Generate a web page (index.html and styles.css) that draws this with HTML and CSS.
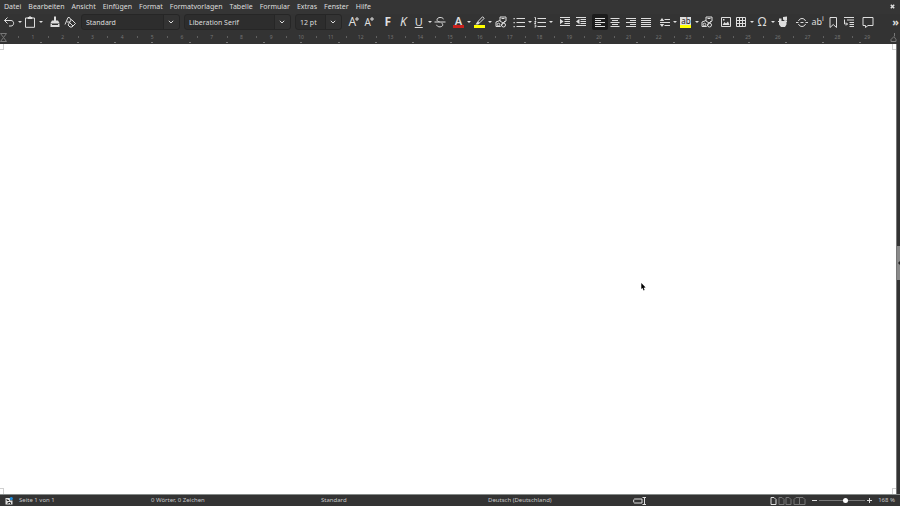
FILE: index.html
```html
<!DOCTYPE html>
<html lang="de">
<head>
    <meta charset="UTF-8">
    <meta name="viewport" content="width=device-width, initial-scale=1.0">
    <title>Writer</title>
    <link rel="stylesheet" href="styles.css">
</head>
<body>
    <nav class="menubar">
        <button>Datei</button>
        <button>Bearbeiten</button>
        <button>Ansicht</button>
        <button>Einfügen</button>
        <button>Format</button>
        <button>Formatvorlagen</button>
        <button>Tabelle</button>
        <button>Formular</button>
        <button>Extras</button>
        <button>Fenster</button>
        <button>Hilfe</button>
        <button class="close" aria-label="Schließen"><svg width="5" height="5" viewBox="0 0 5 5"><path class="thick" d="M.8.8l3.4 3.4M4.2.8L.8 4.2"/></svg></button>
    </nav>

    <div class="toolbar">
        <div class="group split-pair">
            <button aria-label="Rückgängig"><svg class="icon" viewBox="0 0 12 12"><path d="M4.5 1.500L1.500 4.500l3 3M1.500 4.500h6.500c3.500 0 3.500 5.500 0 5.500H6"/></svg></button>
            <button class="caret" aria-label="Rückgängig Liste"></button>
            <button aria-label="Einfügen"><svg class="icon" viewBox="0 0 12 12"><path d="M3.500 2H1.500v9.300h9V2h-2"/><path class="fill" d="M3.500 1h1.500l.5-.8h1l.5.8h1.500v2h-5z"/></svg></button>
            <button class="caret" aria-label="Einfügen Liste"></button>
        </div>
        <div class="group pair">
            <button aria-label="Format übertragen"><svg class="icon" viewBox="0 0 12 12"><path class="fill" d="M5 .5h2v4h2L10.500 7h-9L3 4.500h2zM1.500 7.500h9V11h-9z"/><path class="dark" d="M3 8.500h6"/></svg></button>
            <button aria-label="Formatierung löschen"><svg class="icon" viewBox="0 0 12 12"><path d="M1 8.500L4 1.500h1.500L7 4M3 6h3M7.500 3.500l4 4-3.500 3.500H6L4 9zM5.500 6.500l3.500 3.500"/></svg></button>
        </div>
        <div class="combo combo-style">
            <select aria-label="Absatzvorlage"><option>Standard</option></select>
            <svg viewBox="0 0 6 4"><path d="M.8.8L3 3 5.200.8"/></svg>
        </div>
        <div class="combo combo-font">
            <select aria-label="Schriftname"><option>Liberation Serif</option></select>
            <svg viewBox="0 0 6 4"><path d="M.8.8L3 3 5.200.8"/></svg>
        </div>
        <div class="combo combo-size">
            <select aria-label="Schriftgröße"><option>12 pt</option></select>
            <svg viewBox="0 0 6 4"><path d="M.8.8L3 3 5.200.8"/></svg>
        </div>
        <div class="group pair">
            <button class="glyph" aria-label="Größer">A<svg class="mark" viewBox="0 0 4 4"><path d="M0 2h4M2 0v4"/></svg></button>
            <button class="glyph small" aria-label="Kleiner">A<svg class="mark" viewBox="0 0 4 4"><path d="M0 2h4M2 0v4"/></svg></button>
        </div>
        <div class="group font-style">
            <button class="glyph bold">F</button>
            <button class="glyph italic">K</button>
            <button class="glyph underline">U</button>
            <button class="caret" aria-label="Unterstreichung Liste"></button>
            <button aria-label="Durchgestrichen"><svg class="icon" viewBox="0 0 12 12"><path d="M9.500 3.300C9 .8 3 .8 3 3.800c0 1.200 1 1.700 2.500 2M.5 6h11M7.500 6.800C10.500 9.500 7.500 11.200 5 10.800c-1.200-.2-2-.8-2.500-2"/></svg></button>
        </div>
        <div class="group colors">
            <button class="swatch red">A</button>
            <button class="caret" aria-label="Schriftfarbe Liste"></button>
            <button class="swatch yellow" aria-label="Zeichenhervorhebung"><svg width="10" height="9" viewBox="0 0 10 9"><path d="M3 5.500L7.500.800l1.700 1.500-4.500 4.500z"/><path class="fill" d="M2.500 5.500l2.200 1.800L3 8.500H.5z"/></svg></button>
            <button class="caret" aria-label="Hervorhebung Liste"></button>
            <button aria-label="Zeichen"><svg class="icon" viewBox="0 0 12 12"><path d="M5 1h6v4L8 7 5 5zM6.500 2.500h3M5 4.500L1 6v4.500h4.500L10 5"/><circle cx="3.500" cy="8.500" r="1.300"/><circle cx="8.500" cy="9" r="2"/></svg></button>
        </div>
        <div class="group split-pair">
            <button aria-label="Aufzählung"><svg class="icon" viewBox="0 0 12 12"><path d="M3.500 2.500H12M3.500 6.500H12M3.500 10.500H12"/><path class="fill" d="M.5 2h1.300v1.200H.5zM.5 6h1.300v1.200H.5zM.5 10h1.300v1.200H.5z"/></svg></button>
            <button class="caret" aria-label="Aufzählung Liste"></button>
            <button aria-label="Nummerierung"><svg class="icon" viewBox="0 0 12 12"><path d="M3.500 2.500H12M3.500 6.500H12M3.500 10.500H12M.5 1.500h1v3M.5 5.500h1.500L.5 7.500h1.500M.5 9h1.300v2H.5"/></svg></button>
            <button class="caret" aria-label="Nummerierung Liste"></button>
        </div>
        <div class="group indent">
            <button aria-label="Einzug erhöhen"><svg class="icon" viewBox="0 0 12 12"><path d="M1 1.500h10M5.500 3.500h5.500M5.500 5.500h5.500M5.500 7.500h5.500M1 9.500h10"/><path class="fill" d="M1 2.800L4.500 5.500 1 8.200z"/></svg></button>
            <button aria-label="Einzug verringern"><svg class="icon" viewBox="0 0 12 12"><path d="M1 1.500h10M5.500 3.500h5.500M5.500 5.500h5.500M5.500 7.500h5.500M1 9.500h10"/><path class="fill" d="M4.500 2.800L1 5.500l3.500 2.700z"/></svg></button>
        </div>
        <div class="group four">
            <button class="active" aria-label="Linksbündig"><svg class="icon" viewBox="0 0 12 12"><path d="M1 2.500h10M1 4.500h6M1 6.500h10M1 8.500h6M1 10.500h10"/></svg></button>
            <button aria-label="Zentriert"><svg class="icon" viewBox="0 0 12 12"><path d="M1.500 2.500h9M3 4.500h6M1.500 6.500h9M3 8.500h6M1.500 10.500h9"/></svg></button>
            <button aria-label="Rechtsbündig"><svg class="icon" viewBox="0 0 12 12"><path d="M1 2.500h10M5 4.500h6M1 6.500h10M5 8.500h6M1 10.500h10"/></svg></button>
            <button aria-label="Blocksatz"><svg class="icon" viewBox="0 0 12 12"><path d="M1 2.500h10M1 4.500h10M1 6.500h10M1 8.500h10M1 10.500h10"/></svg></button>
        </div>
        <div class="group spacing">
            <button aria-label="Zeilenabstand"><svg class="icon" viewBox="0 0 12 12"><path d="M5.500 3.500H11M1 6.500h10M5.500 9.500H11"/><path class="fill" d="M.8 5L3 2l2.200 3zM.8 8L3 11l2.200-3z"/></svg></button>
            <button class="caret" aria-label="Zeilenabstand Liste"></button>
            <button class="marker" aria-label="Absatzhintergrund"><span>ab</span></button>
            <button class="caret" aria-label="Absatzhintergrund Liste"></button>
            <button aria-label="Absatz"><svg class="icon" viewBox="0 0 12 12"><path d="M5 1h6v4L8 7 5 5zM6.500 2.500h3M5 4.500L1 6v4.500h4.500L10 5"/><circle cx="3.500" cy="8.500" r="1.300"/><circle cx="8.500" cy="9" r="2"/></svg></button>
        </div>
        <div class="group insert">
            <button aria-label="Bild"><svg class="icon" viewBox="0 0 12 12"><path d="M1.500 1.500h9v9h-9z"/><path class="fill" d="M2.500 9l2-3L6 7.500 8 5.500l1.500 3.500zM3 3h1.500v1.500H3z"/></svg></button>
            <button aria-label="Tabelle"><svg class="icon" viewBox="0 0 12 12"><path d="M1.500 1.500h9v9h-9zM1.500 4.500h9M1.500 7.500h9M4.500 1.500v9M7.500 1.500v9"/></svg></button>
            <button class="caret" aria-label="Tabelle Liste"></button>
            <button class="glyph">Ω</button>
            <button class="caret" aria-label="Sonderzeichen Liste"></button>
            <button aria-label="Textbaustein"><svg class="icon" viewBox="0 0 12 12"><path class="fill" d="M2 6h7.500v2.500L8 11H4L2 8.500zM2 2.500h2.500V5H2zM6 1l4-.5v4L8 5 6 3.500z"/><path d="M1 5.500h9"/></svg></button>
        </div>
        <div class="group links">
            <button aria-label="Seitenumbruch"><svg class="icon" viewBox="0 0 12 12"><path d="M0 6.500h2.500M9.500 6.500H12M4.500 6.500h3M2.500 5c1-3.300 6-3.300 7 0M2.500 8c1 3.300 6 3.300 7 0"/></svg></button>
            <button class="glyph note">ab<sup>i</sup></button>
            <button aria-label="Lesezeichen"><svg class="icon" viewBox="0 0 12 12"><path d="M3 1.500h6.500v10L6.250 8.500 3 11.500z"/></svg></button>
            <button aria-label="Querverweis"><svg class="icon" viewBox="0 0 12 12"><path d="M1 1.500h10M4 4h7M6.500 6.500H11M6.500 8.500H11M6.500 10.500H11M1.500 3.500v4.500h3M3 6.500L4.500 8 3 9.500"/></svg></button>
        </div>
        <button class="comment" aria-label="Kommentar"><svg class="icon" viewBox="0 0 12 12"><path d="M1 1.500h10v8H6L3.500 11.500v-2H1z"/></svg></button>
        <button class="more">»</button>
    </div>

    <div class="ruler">
        <svg class="margin-mark" viewBox="0 0 7 9"><path d="M.5.5h6L3.500 4.500zM.5 8.500h6L3.500 4.500z"/></svg>
        <div class="numbers" id="numbers"></div>
        <div class="tabs" id="tabs"></div>
        <svg class="margin-mark end" viewBox="0 0 7 9"><path d="M4.500 0v3M4 3.500L1 6.500v2h5v-2L4 3.500"/></svg>
    </div>

    <main class="workspace">
        <div class="page" contenteditable="true" role="textbox" aria-label="Dokument">
            <i class="corner top left"></i>
            <i class="corner top right"></i>
            <i class="corner bottom left"></i>
            <i class="corner bottom right"></i>
        </div>
        <aside class="sidebar-edge">
            <button class="handle" aria-label="Seitenleiste"></button>
        </aside>
        <svg class="pointer" viewBox="0 0 5 8"><path d="M.3 0v6l1.300-1 1 2.500 1-.5-1-2.300 2-.2z"/></svg>
    </main>

    <footer class="statusbar">
        <span class="save"><svg width="8" height="8" viewBox="0 0 8 8"><path class="fill" d="M.5 1h4.500v2.500h2.500V7.500h-7z"/><path class="dark" d="M2 2v1.500h2M3 7V5.500h2.500V7"/><circle class="dot" cx="6.300" cy="1.600" r="1.600"/></svg></span>
        <span>Seite 1 von 1</span>
        <span>0 Wörter, 0 Zeichen</span>
        <span>Standard</span>
        <span>Deutsch (Deutschland)</span>
        <div class="status-right">
            <svg class="insert-mode" width="13" height="8" viewBox="0 0 13 8"><path d="M9 2H1.500C.3 2 .3 6 1.500 6H9zM9.500.5h4M11.500.5v7M9.500 7.500h4"/></svg>
            <div class="views">
                <button aria-label="Einzelseite" class="selected"><svg width="7" height="8" viewBox="0 0 7 8"><path d="M1 .5h3L6 2.500v5H1z"/></svg></button>
                <button aria-label="Mehrere Seiten"><svg width="14" height="8" viewBox="0 0 14 8"><path d="M1 .5h3L6 2.500v5H1zM8 .5h3l2 2v5H8z"/></svg></button>
                <button aria-label="Buchansicht"><svg width="13" height="8" viewBox="0 0 13 8"><path d="M6.500.5H3L1 2.500v5h5.500zM6.500.5H10l2 2v5H6.500z"/></svg></button>
            </div>
            <div class="zoom">
                <button aria-label="Verkleinern"><svg width="5" height="5" viewBox="0 0 5 5"><path d="M0 2.500h5"/></svg></button>
                <input type="range" aria-label="Zoom" min="0" max="100" value="58">
                <button aria-label="Vergrößern"><svg width="5" height="5" viewBox="0 0 5 5"><path d="M0 2.500h5M2.500 0v5"/></svg></button>
            </div>
            <span>168 %</span>
        </div>
    </footer>

    <script>
        const numbers = document.getElementById('numbers');
        const tabs = document.getElementById('tabs');

        // Zentimeter
        for (let i = 1; i <= 29; i++) {
            const cell = document.createElement('span');
            cell.textContent = i;
            numbers.appendChild(cell);
        }

        // Standardtabulatoren
        for (let i = 0; i < 23; i++) {
            tabs.appendChild(document.createElement('span'));
        }
    </script>
</body>
</html>
```
FILE: styles.css
```css
* {
    box-sizing: border-box;
}
body {
    margin: 0;
    height: 100vh;
    display: flex;
    flex-direction: column;
    overflow: hidden;
    background: #333;
    color: #dedede;
    font-family: "Noto Sans", "Open Sans", sans-serif;
    font-size: 7px;
}
button {
    display: flex;
    align-items: center;
    justify-content: center;
    padding: 0;
    border: none;
    background: none;
    color: inherit;
    font: inherit;
}
svg {
    display: block;
    flex: none;
    fill: none;
    stroke: #dedede;
}
svg .fill {
    fill: #dedede;
    stroke: none;
}
svg .thick {
    stroke-width: 1.5;
}
svg .dark {
    stroke: #333;
}

/* Menü */
.menubar {
    display: flex;
    gap: 7px;
    height: 14px;
    padding: 0 5px 1px 4px;
    background: #353535;
}
.close {
    margin-left: auto;
}

/* Symbolleiste */
.toolbar {
    display: flex;
    align-items: center;
    gap: 3px;
    height: 18px;
    padding: 0 1px 2px;
}
.group {
    display: flex;
    flex: none;
    height: 16px;
}
.group button {
    flex: 1;
    min-width: 0;
    border-radius: 2px;
}
.split-pair {
    width: 43px;
}
.pair {
    width: 31px;
}
.indent {
    width: 32px;
}
.font-style {
    width: 68px;
}
.colors {
    width: 57px;
}
.four {
    width: 62px;
}
.spacing {
    width: 58px;
}
.insert {
    width: 73px;
}
.links {
    width: 63px;
}
.icon {
    width: 12px;
    height: 12px;
}
.group .caret {
    flex: none;
    width: 6px;
}
.caret::after {
    content: "";
    border: 2px solid transparent;
    border-top-color: #dedede;
    border-bottom: none;
}
.group .active {
    background: #1c1c1c;
}
.combo {
    display: grid;
    grid-template-columns: 1fr 16px;
    align-items: center;
    flex: none;
    height: 16px;
    margin-right: 1px;
    border: 1px solid #262626;
    border-radius: 3px;
    background: linear-gradient(to left, #333 15px, #262626 15px, #262626 16px, #2d2d2d 16px);
}
.combo select {
    grid-area: 1 / 1 / 2 / 3;
    height: 14px;
    padding: 0 0 0 4px;
    appearance: none;
    border: none;
    background: none;
    color: inherit;
    font: inherit;
}
.combo svg {
    grid-area: 1 / 2;
    width: 6px;
    height: 4px;
    justify-self: center;
    pointer-events: none;
}
.combo-style {
    width: 99px;
}
.combo-font {
    width: 107px;
}
.combo-size {
    width: 47px;
}
.glyph {
    font-size: 12px;
    line-height: 16px;
}
.glyph.small {
    font-size: 10px;
}
.mark {
    width: 4px;
    height: 4px;
    align-self: flex-start;
    margin: 3px 0 0 -1px;
}
.bold {
    font-weight: bold;
}
.italic {
    font-style: italic;
}
.underline {
    font-size: 11px;
    text-decoration: underline;
}
.note {
    font-size: 9px;
}
.note sup {
    align-self: flex-start;
    font-size: 7px;
    line-height: 10px;
}
.swatch {
    flex-direction: column;
    font-size: 11px;
    font-weight: 600;
    line-height: 9px;
}
.swatch::after {
    content: "";
    flex: none;
    width: 11px;
    height: 3px;
}
.red::after {
    background: #c9211e;
}
.yellow::after {
    background: #ff0;
}
.marker span {
    width: 11px;
    height: 11px;
    border-bottom: 3px solid #ff0;
    background: #dedede;
    color: #222;
    font-size: 8px;
    line-height: 8px;
}
.comment {
    width: 15px;
}
.more {
    margin-left: auto;
    font-size: 11px;
    font-weight: bold;
    line-height: 14px;
}

/* Lineal */
.ruler {
    display: grid;
    grid-template-rows: 8px 2px;
    height: 12px;
    padding-top: 1px;
    position: relative;
    color: #757575;
    font-size: 5px;
    line-height: 8px;
}
.numbers {
    display: flex;
    margin: 0 18px;
}
.numbers span {
    flex: 1;
    text-align: center;
    background: linear-gradient(#606060, #606060) left center / 1px 2px no-repeat;
}
.tabs {
    display: flex;
    margin: 0 21px 0 22px;
}
.tabs span {
    flex: 1;
    background: linear-gradient(#757575, #757575) center / 2px 1px no-repeat;
}
.margin-mark {
    position: absolute;
    left: 0;
    top: 1px;
    width: 7px;
    height: 9px;
    stroke: #777;
}
.margin-mark.end {
    left: auto;
    right: 3px;
}

/* Dokument */
.workspace {
    display: flex;
    flex: 1;
    position: relative;
}
.page {
    flex: 1;
    position: relative;
    background: #fff;
    outline: none;
}
.corner {
    position: absolute;
    width: 4px;
    height: 6px;
    border: 0 solid #d0d0d0;
}
.top {
    top: 0;
    border-bottom-width: 1px;
}
.bottom {
    bottom: 0;
    border-top-width: 1px;
}
.left {
    left: 0;
    border-right-width: 1px;
}
.right {
    right: 0;
    border-left-width: 1px;
}
.sidebar-edge {
    display: flex;
    align-items: center;
    width: 4px;
    padding-bottom: 12px;
    border-left: 1px solid #777;
    background: #333;
}
.handle {
    width: 3px;
    height: 34px;
    background: #8a8a8a;
}
.handle::after {
    content: "";
    border: 2px solid transparent;
    border-right-color: #222;
    border-left: none;
}
.pointer {
    position: absolute;
    left: 641px;
    top: 239px;
    width: 5px;
    height: 8px;
    stroke: none;
    fill: #000;
}

/* Statusleiste */
.statusbar {
    display: grid;
    grid-template-columns: 19fr 132fr 170fr 167fr 145fr 267fr;
    align-items: center;
    height: 12px;
    border-top: 1px solid #858a88;
    color: #c8c8c8;
    font-size: 6px;
    line-height: 11px;
    white-space: nowrap;
}
.save {
    padding-left: 5px;
}
.dot {
    fill: #1e90e0;
    stroke: none;
}
.status-right {
    display: flex;
    align-items: center;
    gap: 6px;
    padding-right: 5px;
}
.insert-mode {
    margin-right: auto;
}
.views {
    display: flex;
    gap: 1px;
}
.views svg {
    stroke: #777;
}
.views .selected svg {
    stroke: #dedede;
}
.zoom {
    display: flex;
    align-items: center;
    gap: 2px;
}
input[type="range"] {
    width: 46px;
    height: 5px;
    margin: 0;
    appearance: none;
    background: linear-gradient(#777, #777) center / 100% 1px no-repeat;
}
input[type="range"]::-webkit-slider-thumb {
    appearance: none;
    width: 5px;
    height: 5px;
    border-radius: 50%;
    background: #fff;
}
```
